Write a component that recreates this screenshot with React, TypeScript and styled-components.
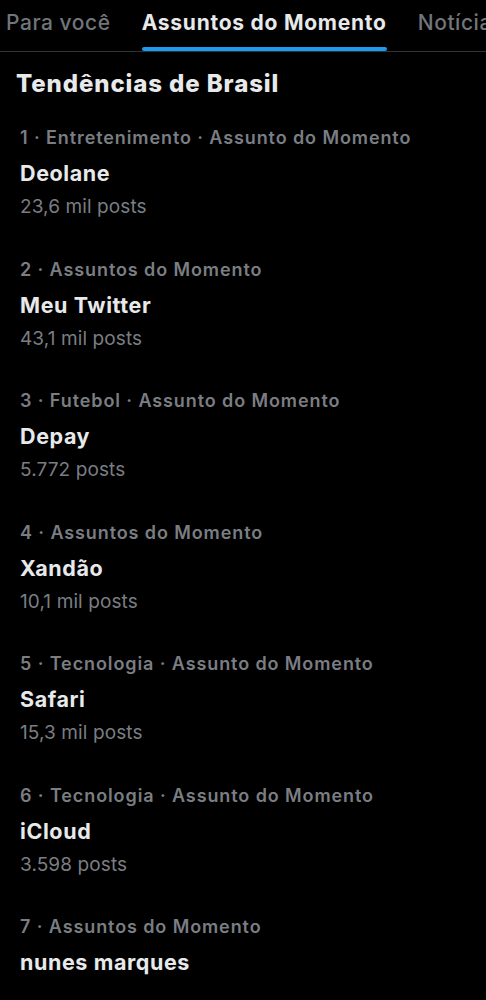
import React from "react";
import styled, { createGlobalStyle } from "styled-components";

const Global = createGlobalStyle`
  html, body { margin: 0; padding: 0; background: #000; }
  body { font-family: Inter, "Noto Sans", sans-serif; color: #e7e9ea; }
`;

const Page = styled.div`
  width: 486px;
  height: 1000px;
  background: #000;
  overflow: hidden;
`;

const Tabs = styled.nav`
  display: flex;
  gap: 31px;
  height: 51px;
  padding-left: 6px;
  border-bottom: 1px solid #2f3336;
  white-space: nowrap;
  overflow: hidden;
`;

const Tab = styled.div<{ $active?: boolean }>`
  position: relative;
  flex-shrink: 0;
  line-height: 46px;
  font-size: 21px;
  font-weight: ${(p) => (p.$active ? 700 : 500)};
  color: ${(p) => (p.$active ? "#e7e9ea" : "#71767b")};
  letter-spacing: ${(p) => (p.$active ? "0.75px" : "0.55px")};
  &::after {
    content: "";
    display: ${(p) => (p.$active ? "block" : "none")};
    position: absolute;
    left: 0;
    right: 0;
    bottom: 0;
    height: 4px;
    border-radius: 2px;
    background: #1d9bf0;
  }
`;

const Title = styled.h1`
  margin: 0;
  padding: 16.5px 16px 0;
  font-size: 24px;
  font-weight: 800;
  letter-spacing: 0.9px;
  color: #e7e9ea;
  line-height: 30px;
`;

const List = styled.div`
  display: flex;
  flex-direction: column;
  padding: 26.5px 20px 0;
`;

const Item = styled.div`
  height: 131.5px;
  display: flex;
  flex-direction: column;
`;

const Meta = styled.div`
  font-size: 18px;
  font-weight: 600;
  letter-spacing: 0.9px;
  color: #7a7e83;
  line-height: 26px;
  white-space: nowrap;
`;

const Name = styled.div`
  margin-top: 8px;
  font-size: 21.5px;
  font-weight: 700;
  letter-spacing: 0.6px;
  color: #e7e9ea;
  line-height: 28px;
`;

const Count = styled.div`
  margin-top: 7px;
  font-size: 19px;
  font-weight: 400;
  letter-spacing: 0.1px;
  color: #7a7e83;
  line-height: 26px;
`;

const trends = [
  { meta: "1 · Entretenimento · Assunto do Momento", name: "Deolane", count: "23,6 mil posts" },
  { meta: "2 · Assuntos do Momento", name: "Meu Twitter", count: "43,1 mil posts" },
  { meta: "3 · Futebol · Assunto do Momento", name: "Depay", count: "5.772 posts" },
  { meta: "4 · Assuntos do Momento", name: "Xandão", count: "10,1 mil posts" },
  { meta: "5 · Tecnologia · Assunto do Momento", name: "Safari", count: "15,3 mil posts" },
  { meta: "6 · Tecnologia · Assunto do Momento", name: "iCloud", count: "3.598 posts" },
  { meta: "7 · Assuntos do Momento", name: "nunes marques", count: "" },
];

export default function App() {
  return (
    <Page>
      <Global />
      <Tabs>
        <Tab>Para você</Tab>
        <Tab $active>Assuntos do Momento</Tab>
        <Tab>Notícias</Tab>
      </Tabs>
      <Title>Tendências de Brasil</Title>
      <List>
        {trends.map((t) => (
          <Item key={t.meta}>
            <Meta>{t.meta}</Meta>
            <Name>{t.name}</Name>
            {t.count && <Count>{t.count}</Count>}
          </Item>
        ))}
      </List>
    </Page>
  );
}
